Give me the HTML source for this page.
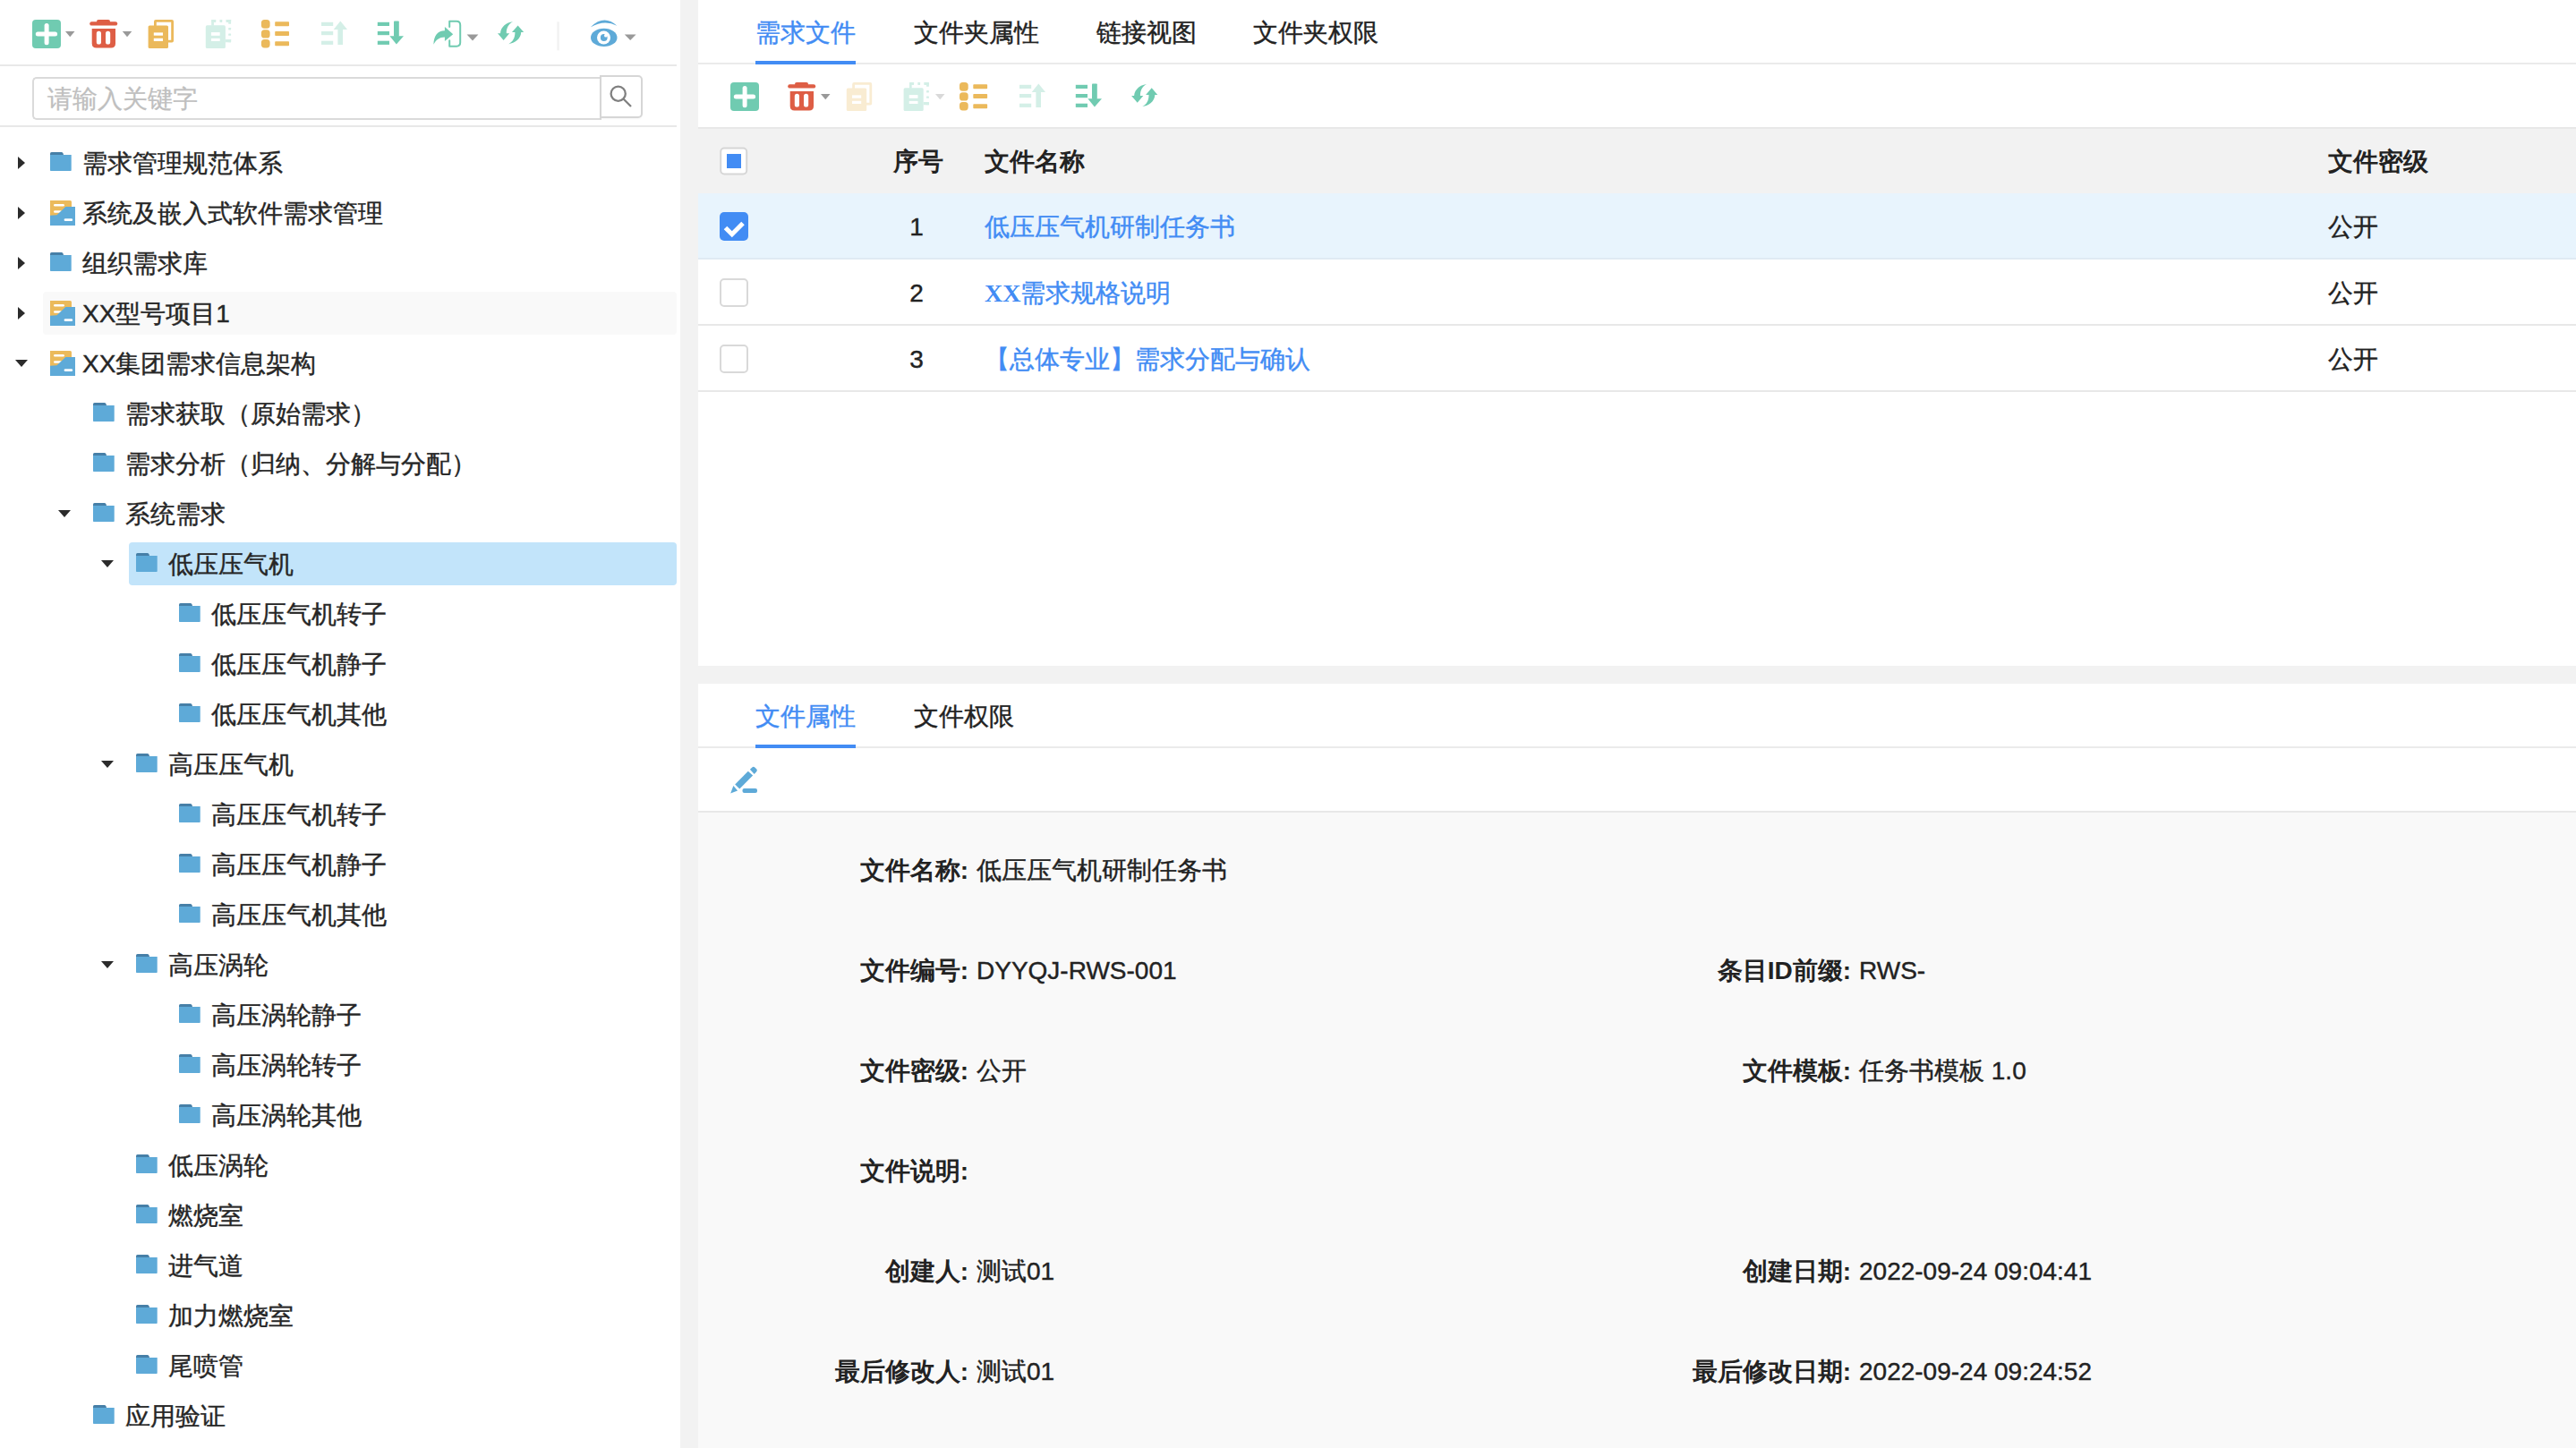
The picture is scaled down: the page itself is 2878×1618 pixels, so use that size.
<!DOCTYPE html>
<html><head><meta charset="utf-8"><style>
html,body{margin:0;padding:0;}
body{width:2878px;height:1618px;overflow:hidden;position:relative;background:#fff;font-family:'Liberation Sans',sans-serif;}
.a{position:absolute;}
</style></head><body>
<div class="a" style="left:760px;top:0;width:20px;height:1618px;background:#f2f2f2"></div>
<div class="a" style="left:0;top:72px;width:756px;height:2px;background:#e8e8e8"></div>
<div class="a" style="left:0;top:140px;width:756px;height:2px;background:#e8e8e8"></div>
<div class="a" style="left:36px;top:86px;width:634px;height:44px;border:2px solid #dadada;border-right:none;border-radius:5px 0 0 5px;"></div>
<div class="a" style="left:670px;top:84px;width:44px;height:44px;border:2px solid #d6d6d6;border-radius:0 5px 5px 0;background:#fff;box-shadow:0 1px 2px rgba(0,0,0,0.04)"></div>
<div class="a" style="left:53px;top:83px;line-height:56px;font-size:28px;color:#bfbfbf;white-space:nowrap;-webkit-text-stroke:0.3px #bfbfbf">请输入关键字</div>
<svg class="a" style="left:0;top:0" width="2878" height="1618"><circle cx="690.7" cy="104.7" r="8.1" fill="none" stroke="#808080" stroke-width="2.3"/><line x1="696.5" y1="110.5" x2="705" y2="119" stroke="#808080" stroke-width="2.3"/></svg>
<div style="position:absolute;left:48px;top:326px;width:708px;height:48px;background:#f9f9f9;border-radius:4px"></div><div style="position:absolute;left:144px;top:606px;width:612px;height:48px;background:#c2e4fa;border-radius:4px"></div>
<div class="a" style="left:780px;top:70px;width:2098px;height:2px;background:#ebebeb"></div>
<div class="a" style="left:844px;top:68px;width:112px;height:4px;background:#428cf4"></div>
<div class="a" style="left:780px;top:142px;width:2098px;height:2px;background:#e8e8e8"></div>
<div class="a" style="left:780px;top:144px;width:2098px;height:72px;background:#f2f2f2"></div>
<div class="a" style="left:780px;top:216px;width:2098px;height:72px;background:#e8f4fd"></div>
<div class="a" style="left:780px;top:288px;width:2098px;height:2px;background:#dfeaf3"></div>
<div class="a" style="left:780px;top:362px;width:2098px;height:2px;background:#e8e8e8"></div>
<div class="a" style="left:780px;top:436px;width:2098px;height:2px;background:#e8e8e8"></div>
<div class="a" style="left:780px;top:744px;width:2098px;height:20px;background:#f2f2f2"></div>
<div class="a" style="left:780px;top:834px;width:2098px;height:2px;background:#ebebeb"></div>
<div class="a" style="left:844px;top:832px;width:112px;height:4px;background:#428cf4"></div>
<div class="a" style="left:780px;top:906px;width:2098px;height:2px;background:#e8e8e8"></div>
<div class="a" style="left:780px;top:908px;width:2098px;height:710px;background:#f9f9f9"></div>
<svg class="a" style="left:0;top:0" width="2878" height="1618"><rect x="36" y="22" width="32" height="32" rx="4" fill="#70cbb1" /><path d="M42.3 38.1 H61.5 M52.1 28.5 V36" stroke="none"/><line x1="42.3" y1="38.1" x2="61.6" y2="38.1" stroke="#fff" stroke-width="5" stroke-linecap="round"/><line x1="52.1" y1="28.5" x2="52.1" y2="47.7" stroke="#fff" stroke-width="5" stroke-linecap="round"/><path d="M73 35 L83.5 35 L78.25 41.2 Z" fill="#999"/><rect x="100.2" y="24.2" width="31" height="4.4" rx="2.2" fill="#de5e45" /><rect x="108" y="22" width="15" height="4" rx="2" fill="#de5e45" /><path d="M102.7 32 H129 V48.4 Q129 53.4 124 53.4 H107.7 Q102.7 53.4 102.7 48.4 Z" fill="#de5e45"/><rect x="107.8" y="34.8" width="5.2" height="14.7" rx="2.6" fill="#fff" /><rect x="118" y="34.8" width="5.2" height="14.7" rx="2.6" fill="#fff" /><path d="M136.8 35 L147.3 35 L142.05 41.2 Z" fill="#999"/><rect x="173.4" y="23.4" width="19.2" height="22.8" rx="0.6" fill="none" stroke="#ebb95b" stroke-width="2.8"/><rect x="165.6" y="28.5" width="22.4" height="25.5" rx="1.6" fill="#ebb95b" /><rect x="171.79999999999998" y="36.4" width="10.2" height="3.3" rx="0" fill="#fff" /><rect x="171.79999999999998" y="42.8" width="10.2" height="3.2" rx="0" fill="#fff" /><rect x="229.8" y="28.3" width="22.1" height="25.7" rx="1.6" fill="#d4efe7" /><rect x="235.9" y="36.1" width="9.8" height="3.7" rx="0" fill="#fff" /><rect x="235.9" y="42.9" width="9.8" height="3.1" rx="0" fill="#fff" /><rect x="236.20000000000002" y="22.1" width="5.1" height="2.8" rx="0.4" fill="#d4efe7" /><rect x="245.5" y="22.1" width="2.8" height="2.8" rx="0.4" fill="#d4efe7" /><rect x="252.5" y="22.1" width="5.6" height="2.8" rx="0.4" fill="#d4efe7" /><rect x="236.20000000000002" y="22.1" width="2.7" height="6.7" rx="0.4" fill="#d4efe7" /><rect x="255.20000000000002" y="22.1" width="2.9" height="4.7" rx="0.4" fill="#d4efe7" /><rect x="255.20000000000002" y="31.1" width="2.9" height="2.4" rx="0.4" fill="#d4efe7" /><rect x="255.20000000000002" y="37.5" width="2.9" height="2.3" rx="0.4" fill="#d4efe7" /><rect x="255.20000000000002" y="44.1" width="2.9" height="3.2" rx="0.4" fill="#d4efe7" /><rect x="251.9" y="44.1" width="6.2" height="3.2" rx="0.4" fill="#d4efe7" /><rect x="291.9" y="22" width="9.7" height="9.8" rx="3.6" fill="#ebb95b" /><rect x="291.9" y="33.2" width="9.7" height="9.3" rx="3.6" fill="#ebb95b" /><rect x="291.9" y="44" width="9.7" height="9.399999999999999" rx="3.6" fill="#ebb95b" /><rect x="307.2" y="24.3" width="15.8" height="5" rx="0.8" fill="#ebb95b" /><rect x="307.2" y="35" width="15.8" height="5" rx="0.8" fill="#ebb95b" /><rect x="307.2" y="46.2" width="15.8" height="5" rx="0.8" fill="#ebb95b" /><rect x="359" y="24.8" width="13.2" height="4.2" rx="0" fill="#d4efe7" /><rect x="359" y="35" width="13.2" height="4.2" rx="0" fill="#d4efe7" /><rect x="359" y="45.7" width="13.2" height="4.2" rx="0" fill="#d4efe7" /><rect x="377.4" y="32.5" width="5.6" height="17.5" rx="0" fill="#d4efe7" /><path d="M372.7 32.9 L380.3 23.6 L388 32.9 Z" fill="#d4efe7"/><rect x="421.8" y="24.8" width="13.2" height="4.2" rx="0" fill="#70cbb1" /><rect x="421.8" y="35" width="13.2" height="4.2" rx="0" fill="#70cbb1" /><rect x="421.8" y="45.7" width="13.2" height="4.2" rx="0" fill="#70cbb1" /><rect x="440.0" y="23.4" width="5.8" height="17.5" rx="0.8" fill="#70cbb1" /><path d="M435.40000000000003 40.2 L442.90000000000003 49.5 L451.0 40.2 Z" fill="#70cbb1"/><path d="M502.2 29.9 V23.8 H510 Q514.2 23.8 514.2 28 V47.6 Q514.2 51.7 510 51.7 H502.2 V45.3" fill="none" stroke="#70cbb1" stroke-width="2" stroke-linecap="round" stroke-linejoin="round"/><path d="M484.4 49.8 C484.6 40 489 34.3 496.9 34.3 V30 L506.2 38.2 L496.9 45.9 V41.5 C491 41.5 487 44.5 484.4 49.8 Z" fill="#70cbb1"/><path d="M521.6 38.4 L534.4 38.4 L528.0 45.4 Z" fill="#999"/><g transform="translate(0 0)"><path d="M573 24.2 C566 25 559.3 30 559 37.3 L556 37.3 L562.6 44.9 L569.2 37.3 L565.8 37.3 C565.8 31 568 27 573 24.2 Z" fill="#70cbb1"/><path d="M573 24.2 C566 25 559.3 30 559 37.3 L556 37.3 L562.6 44.9 L569.2 37.3 L565.8 37.3 C565.8 31 568 27 573 24.2 Z" fill="#70cbb1" transform="rotate(180 570.6 36.7)"/></g><rect x="622.3" y="24.3" width="2.5" height="32" rx="0" fill="#f2f2f2" /><ellipse cx="674.75" cy="41.9" rx="14.75" ry="10.2" fill="#5eaad8"/><circle cx="674.5" cy="42" r="7.5" fill="#fff"/><circle cx="674.75" cy="42" r="3.9" fill="#5eaad8"/><circle cx="676.9" cy="39.7" r="1.9" fill="#fff"/><path d="M660.2 29.9 Q674.9 15.6 689.3 28.7 Q674.9 21.8 660.1 30.3 Z" fill="#5eaad8"/><path d="M697.8 38.5 L710.5999999999999 38.5 L704.1999999999999 45.1 Z" fill="#999"/><rect x="816" y="92" width="32" height="32" rx="4" fill="#70cbb1" /><path d="M822.3 108.1 H841.5 M832.1 98.5 V816" stroke="none"/><line x1="822.3" y1="108.1" x2="841.6" y2="108.1" stroke="#fff" stroke-width="5" stroke-linecap="round"/><line x1="832.1" y1="98.5" x2="832.1" y2="117.7" stroke="#fff" stroke-width="5" stroke-linecap="round"/><rect x="880.2" y="94.2" width="31" height="4.4" rx="2.2" fill="#de5e45" /><rect x="888" y="92" width="15" height="4" rx="2" fill="#de5e45" /><path d="M882.7 102 H909 V118.4 Q909 123.4 904 123.4 H887.7 Q882.7 123.4 882.7 118.4 Z" fill="#de5e45"/><rect x="887.8" y="104.8" width="5.2" height="14.7" rx="2.6" fill="#fff" /><rect x="898" y="104.8" width="5.2" height="14.7" rx="2.6" fill="#fff" /><path d="M917 105 L927.5 105 L922.25 111.2 Z" fill="#999"/><rect x="953.5999999999999" y="93.4" width="19.2" height="22.8" rx="0.6" fill="none" stroke="#f9ecd2" stroke-width="2.8"/><rect x="945.8" y="98.5" width="22.4" height="25.5" rx="1.6" fill="#f9ecd2" /><rect x="952.0" y="106.4" width="10.2" height="3.3" rx="0" fill="#fff" /><rect x="952.0" y="112.8" width="10.2" height="3.2" rx="0" fill="#fff" /><rect x="1009.6" y="98.3" width="22.1" height="25.7" rx="1.6" fill="#d4efe7" /><rect x="1015.7" y="106.1" width="9.8" height="3.7" rx="0" fill="#fff" /><rect x="1015.7" y="112.9" width="9.8" height="3.1" rx="0" fill="#fff" /><rect x="1016.0" y="92.1" width="5.1" height="2.8" rx="0.4" fill="#d4efe7" /><rect x="1025.3" y="92.1" width="2.8" height="2.8" rx="0.4" fill="#d4efe7" /><rect x="1032.3" y="92.1" width="5.6" height="2.8" rx="0.4" fill="#d4efe7" /><rect x="1016.0" y="92.1" width="2.7" height="6.7" rx="0.4" fill="#d4efe7" /><rect x="1035.0" y="92.1" width="2.9" height="4.7" rx="0.4" fill="#d4efe7" /><rect x="1035.0" y="101.1" width="2.9" height="2.4" rx="0.4" fill="#d4efe7" /><rect x="1035.0" y="107.5" width="2.9" height="2.3" rx="0.4" fill="#d4efe7" /><rect x="1035.0" y="114.1" width="2.9" height="3.2" rx="0.4" fill="#d4efe7" /><rect x="1031.7" y="114.1" width="6.2" height="3.2" rx="0.4" fill="#d4efe7" /><path d="M1045 105 L1055.5 105 L1050.25 111.2 Z" fill="#d9d9d9"/><rect x="1072" y="92" width="9.7" height="9.8" rx="3.6" fill="#ebb95b" /><rect x="1072" y="103.2" width="9.7" height="9.3" rx="3.6" fill="#ebb95b" /><rect x="1072" y="114" width="9.7" height="9.399999999999999" rx="3.6" fill="#ebb95b" /><rect x="1087.3" y="94.3" width="15.8" height="5" rx="0.8" fill="#ebb95b" /><rect x="1087.3" y="105" width="15.8" height="5" rx="0.8" fill="#ebb95b" /><rect x="1087.3" y="116.2" width="15.8" height="5" rx="0.8" fill="#ebb95b" /><rect x="1139" y="94.8" width="13.2" height="4.2" rx="0" fill="#d4efe7" /><rect x="1139" y="105" width="13.2" height="4.2" rx="0" fill="#d4efe7" /><rect x="1139" y="115.7" width="13.2" height="4.2" rx="0" fill="#d4efe7" /><rect x="1157.4" y="102.5" width="5.6" height="17.5" rx="0" fill="#d4efe7" /><path d="M1152.7 102.9 L1160.3 93.6 L1168 102.9 Z" fill="#d4efe7"/><rect x="1201.8" y="94.8" width="13.2" height="4.2" rx="0" fill="#70cbb1" /><rect x="1201.8" y="105" width="13.2" height="4.2" rx="0" fill="#70cbb1" /><rect x="1201.8" y="115.7" width="13.2" height="4.2" rx="0" fill="#70cbb1" /><rect x="1220.0" y="93.4" width="5.8" height="17.5" rx="0.8" fill="#70cbb1" /><path d="M1215.3999999999999 110.2 L1222.8999999999999 119.5 L1231.0 110.2 Z" fill="#70cbb1"/><g transform="translate(708.1 69.8)"><path d="M573 24.2 C566 25 559.3 30 559 37.3 L556 37.3 L562.6 44.9 L569.2 37.3 L565.8 37.3 C565.8 31 568 27 573 24.2 Z" fill="#70cbb1"/><path d="M573 24.2 C566 25 559.3 30 559 37.3 L556 37.3 L562.6 44.9 L569.2 37.3 L565.8 37.3 C565.8 31 568 27 573 24.2 Z" fill="#70cbb1" transform="rotate(180 570.6 36.7)"/></g><path d="M20 175 L28 182 L20 189 Z" fill="#2b2b2b"/><path d="M56 173 V171.6 Q56 170 57.6 170 H68.6 Q69.6 170 70.4 171 L71 173 Z" fill="#467fa7"/><path d="M56 173 H79.7 V190.2 Q79.7 191 78.9 191 H56.8 Q56 191 56 190.2 Z" fill="#5eaad8"/><path d="M20 231 L28 238 L20 245 Z" fill="#2b2b2b"/><path d="M56 224 H78.4 Q80 224 80 225.6 V234 H56 Z" fill="#ebba5b"/><rect x="56" y="230" width="17" height="11" rx="0" fill="#ebba5b" /><rect x="60" y="228" width="11.9" height="2.5" rx="1.25" fill="#fff" /><rect x="60" y="235.2" width="9" height="2.6" rx="1.3" fill="#fff" /><path d="M56 240.7 L63.5 240.2 L73.3 231 H84 V252 H56 Z" fill="#5eaad8"/><rect x="71.6" y="244.2" width="9.6" height="2.9" rx="1.45" fill="#fff" /><path d="M20 287 L28 294 L20 301 Z" fill="#2b2b2b"/><path d="M56 285 V283.6 Q56 282 57.6 282 H68.6 Q69.6 282 70.4 283 L71 285 Z" fill="#467fa7"/><path d="M56 285 H79.7 V302.2 Q79.7 303 78.9 303 H56.8 Q56 303 56 302.2 Z" fill="#5eaad8"/><path d="M20 343 L28 350 L20 357 Z" fill="#2b2b2b"/><path d="M56 336 H78.4 Q80 336 80 337.6 V346 H56 Z" fill="#ebba5b"/><rect x="56" y="342" width="17" height="11" rx="0" fill="#ebba5b" /><rect x="60" y="340" width="11.9" height="2.5" rx="1.25" fill="#fff" /><rect x="60" y="347.2" width="9" height="2.6" rx="1.3" fill="#fff" /><path d="M56 352.7 L63.5 352.2 L73.3 343 H84 V364 H56 Z" fill="#5eaad8"/><rect x="71.6" y="356.2" width="9.6" height="2.9" rx="1.45" fill="#fff" /><path d="M17 402 L31 402 L24 410 Z" fill="#2b2b2b"/><path d="M56 392 H78.4 Q80 392 80 393.6 V402 H56 Z" fill="#ebba5b"/><rect x="56" y="398" width="17" height="11" rx="0" fill="#ebba5b" /><rect x="60" y="396" width="11.9" height="2.5" rx="1.25" fill="#fff" /><rect x="60" y="403.2" width="9" height="2.6" rx="1.3" fill="#fff" /><path d="M56 408.7 L63.5 408.2 L73.3 399 H84 V420 H56 Z" fill="#5eaad8"/><rect x="71.6" y="412.2" width="9.6" height="2.9" rx="1.45" fill="#fff" /><path d="M104 453 V451.6 Q104 450 105.6 450 H116.6 Q117.6 450 118.4 451 L119 453 Z" fill="#467fa7"/><path d="M104 453 H127.7 V470.2 Q127.7 471 126.9 471 H104.8 Q104 471 104 470.2 Z" fill="#5eaad8"/><path d="M104 509 V507.6 Q104 506 105.6 506 H116.6 Q117.6 506 118.4 507 L119 509 Z" fill="#467fa7"/><path d="M104 509 H127.7 V526.2 Q127.7 527 126.9 527 H104.8 Q104 527 104 526.2 Z" fill="#5eaad8"/><path d="M65 570 L79 570 L72 578 Z" fill="#2b2b2b"/><path d="M104 565 V563.6 Q104 562 105.6 562 H116.6 Q117.6 562 118.4 563 L119 565 Z" fill="#467fa7"/><path d="M104 565 H127.7 V582.2 Q127.7 583 126.9 583 H104.8 Q104 583 104 582.2 Z" fill="#5eaad8"/><path d="M113 626 L127 626 L120 634 Z" fill="#2b2b2b"/><path d="M152 621 V619.6 Q152 618 153.6 618 H164.6 Q165.6 618 166.4 619 L167 621 Z" fill="#467fa7"/><path d="M152 621 H175.7 V638.2 Q175.7 639 174.9 639 H152.8 Q152 639 152 638.2 Z" fill="#5eaad8"/><path d="M200 677 V675.6 Q200 674 201.6 674 H212.6 Q213.6 674 214.4 675 L215 677 Z" fill="#467fa7"/><path d="M200 677 H223.7 V694.2 Q223.7 695 222.9 695 H200.8 Q200 695 200 694.2 Z" fill="#5eaad8"/><path d="M200 733 V731.6 Q200 730 201.6 730 H212.6 Q213.6 730 214.4 731 L215 733 Z" fill="#467fa7"/><path d="M200 733 H223.7 V750.2 Q223.7 751 222.9 751 H200.8 Q200 751 200 750.2 Z" fill="#5eaad8"/><path d="M200 789 V787.6 Q200 786 201.6 786 H212.6 Q213.6 786 214.4 787 L215 789 Z" fill="#467fa7"/><path d="M200 789 H223.7 V806.2 Q223.7 807 222.9 807 H200.8 Q200 807 200 806.2 Z" fill="#5eaad8"/><path d="M113 850 L127 850 L120 858 Z" fill="#2b2b2b"/><path d="M152 845 V843.6 Q152 842 153.6 842 H164.6 Q165.6 842 166.4 843 L167 845 Z" fill="#467fa7"/><path d="M152 845 H175.7 V862.2 Q175.7 863 174.9 863 H152.8 Q152 863 152 862.2 Z" fill="#5eaad8"/><path d="M200 901 V899.6 Q200 898 201.6 898 H212.6 Q213.6 898 214.4 899 L215 901 Z" fill="#467fa7"/><path d="M200 901 H223.7 V918.2 Q223.7 919 222.9 919 H200.8 Q200 919 200 918.2 Z" fill="#5eaad8"/><path d="M200 957 V955.6 Q200 954 201.6 954 H212.6 Q213.6 954 214.4 955 L215 957 Z" fill="#467fa7"/><path d="M200 957 H223.7 V974.2 Q223.7 975 222.9 975 H200.8 Q200 975 200 974.2 Z" fill="#5eaad8"/><path d="M200 1013 V1011.6 Q200 1010 201.6 1010 H212.6 Q213.6 1010 214.4 1011 L215 1013 Z" fill="#467fa7"/><path d="M200 1013 H223.7 V1030.2 Q223.7 1031 222.9 1031 H200.8 Q200 1031 200 1030.2 Z" fill="#5eaad8"/><path d="M113 1074 L127 1074 L120 1082 Z" fill="#2b2b2b"/><path d="M152 1069 V1067.6 Q152 1066 153.6 1066 H164.6 Q165.6 1066 166.4 1067 L167 1069 Z" fill="#467fa7"/><path d="M152 1069 H175.7 V1086.2 Q175.7 1087 174.9 1087 H152.8 Q152 1087 152 1086.2 Z" fill="#5eaad8"/><path d="M200 1125 V1123.6 Q200 1122 201.6 1122 H212.6 Q213.6 1122 214.4 1123 L215 1125 Z" fill="#467fa7"/><path d="M200 1125 H223.7 V1142.2 Q223.7 1143 222.9 1143 H200.8 Q200 1143 200 1142.2 Z" fill="#5eaad8"/><path d="M200 1181 V1179.6 Q200 1178 201.6 1178 H212.6 Q213.6 1178 214.4 1179 L215 1181 Z" fill="#467fa7"/><path d="M200 1181 H223.7 V1198.2 Q223.7 1199 222.9 1199 H200.8 Q200 1199 200 1198.2 Z" fill="#5eaad8"/><path d="M200 1237 V1235.6 Q200 1234 201.6 1234 H212.6 Q213.6 1234 214.4 1235 L215 1237 Z" fill="#467fa7"/><path d="M200 1237 H223.7 V1254.2 Q223.7 1255 222.9 1255 H200.8 Q200 1255 200 1254.2 Z" fill="#5eaad8"/><path d="M152 1293 V1291.6 Q152 1290 153.6 1290 H164.6 Q165.6 1290 166.4 1291 L167 1293 Z" fill="#467fa7"/><path d="M152 1293 H175.7 V1310.2 Q175.7 1311 174.9 1311 H152.8 Q152 1311 152 1310.2 Z" fill="#5eaad8"/><path d="M152 1349 V1347.6 Q152 1346 153.6 1346 H164.6 Q165.6 1346 166.4 1347 L167 1349 Z" fill="#467fa7"/><path d="M152 1349 H175.7 V1366.2 Q175.7 1367 174.9 1367 H152.8 Q152 1367 152 1366.2 Z" fill="#5eaad8"/><path d="M152 1405 V1403.6 Q152 1402 153.6 1402 H164.6 Q165.6 1402 166.4 1403 L167 1405 Z" fill="#467fa7"/><path d="M152 1405 H175.7 V1422.2 Q175.7 1423 174.9 1423 H152.8 Q152 1423 152 1422.2 Z" fill="#5eaad8"/><path d="M152 1461 V1459.6 Q152 1458 153.6 1458 H164.6 Q165.6 1458 166.4 1459 L167 1461 Z" fill="#467fa7"/><path d="M152 1461 H175.7 V1478.2 Q175.7 1479 174.9 1479 H152.8 Q152 1479 152 1478.2 Z" fill="#5eaad8"/><path d="M152 1517 V1515.6 Q152 1514 153.6 1514 H164.6 Q165.6 1514 166.4 1515 L167 1517 Z" fill="#467fa7"/><path d="M152 1517 H175.7 V1534.2 Q175.7 1535 174.9 1535 H152.8 Q152 1535 152 1534.2 Z" fill="#5eaad8"/><path d="M104 1573 V1571.6 Q104 1570 105.6 1570 H116.6 Q117.6 1570 118.4 1571 L119 1573 Z" fill="#467fa7"/><path d="M104 1573 H127.7 V1590.2 Q127.7 1591 126.9 1591 H104.8 Q104 1591 104 1590.2 Z" fill="#5eaad8"/><rect x="805.2" y="165.5" width="29" height="29" rx="4" fill="#fff" stroke="#d6d6d6" stroke-width="2"/><rect x="812" y="172" width="16" height="16" rx="0" fill="#428cf4" /><rect x="804" y="237" width="32" height="32" rx="5" fill="#428cf4" /><path d="M810.5 254.5 L817.8 261.8 L830 249.5" fill="none" stroke="#fff" stroke-width="5"/><rect x="805" y="312" width="30" height="30" rx="4" fill="#fff" stroke="#d9d9d9" stroke-width="2"/><rect x="805" y="386" width="30" height="30" rx="4" fill="#fff" stroke="#d9d9d9" stroke-width="2"/><path d="M816.2 886.6 L819.4 878 L824.1 883.4 Z" fill="#5eaad8"/><path d="M821.2 876.4 L835.8 861.7 L841.1 866.4 L826.3 881.5 Z" fill="#5eaad8"/><path d="M837.9 859.8 L840.3 857.4 Q841.8 856 843.3 857.4 L845.2 859.3 Q846.6 860.8 845.2 862.3 L842.7 865.1 Z" fill="#5eaad8"/><rect x="829.5" y="881.1" width="16.5" height="4.8" rx="2" fill="#5eaad8" /></svg>
<div style="position:absolute;left:92px;top:155.0px;line-height:56px;font-size:28px;color:#262626;font-weight:normal;white-space:nowrap;font-family:'Liberation Sans',sans-serif;-webkit-text-stroke:0.4px #262626;">需求管理规范体系</div><div style="position:absolute;left:92px;top:211.0px;line-height:56px;font-size:28px;color:#262626;font-weight:normal;white-space:nowrap;font-family:'Liberation Sans',sans-serif;-webkit-text-stroke:0.4px #262626;">系统及嵌入式软件需求管理</div><div style="position:absolute;left:92px;top:267.0px;line-height:56px;font-size:28px;color:#262626;font-weight:normal;white-space:nowrap;font-family:'Liberation Sans',sans-serif;-webkit-text-stroke:0.4px #262626;">组织需求库</div><div style="position:absolute;left:92px;top:323.0px;line-height:56px;font-size:28px;color:#262626;font-weight:normal;white-space:nowrap;font-family:'Liberation Sans',sans-serif;-webkit-text-stroke:0.4px #262626;">XX型号项目1</div><div style="position:absolute;left:92px;top:379.0px;line-height:56px;font-size:28px;color:#262626;font-weight:normal;white-space:nowrap;font-family:'Liberation Sans',sans-serif;-webkit-text-stroke:0.4px #262626;">XX集团需求信息架构</div><div style="position:absolute;left:140px;top:435.0px;line-height:56px;font-size:28px;color:#262626;font-weight:normal;white-space:nowrap;font-family:'Liberation Sans',sans-serif;-webkit-text-stroke:0.4px #262626;">需求获取（原始需求）</div><div style="position:absolute;left:140px;top:491.0px;line-height:56px;font-size:28px;color:#262626;font-weight:normal;white-space:nowrap;font-family:'Liberation Sans',sans-serif;-webkit-text-stroke:0.4px #262626;">需求分析（归纳、分解与分配）</div><div style="position:absolute;left:140px;top:547.0px;line-height:56px;font-size:28px;color:#262626;font-weight:normal;white-space:nowrap;font-family:'Liberation Sans',sans-serif;-webkit-text-stroke:0.4px #262626;">系统需求</div><div style="position:absolute;left:188px;top:603.0px;line-height:56px;font-size:28px;color:#262626;font-weight:normal;white-space:nowrap;font-family:'Liberation Sans',sans-serif;-webkit-text-stroke:0.4px #262626;">低压压气机</div><div style="position:absolute;left:236px;top:659.0px;line-height:56px;font-size:28px;color:#262626;font-weight:normal;white-space:nowrap;font-family:'Liberation Sans',sans-serif;-webkit-text-stroke:0.4px #262626;">低压压气机转子</div><div style="position:absolute;left:236px;top:715.0px;line-height:56px;font-size:28px;color:#262626;font-weight:normal;white-space:nowrap;font-family:'Liberation Sans',sans-serif;-webkit-text-stroke:0.4px #262626;">低压压气机静子</div><div style="position:absolute;left:236px;top:771.0px;line-height:56px;font-size:28px;color:#262626;font-weight:normal;white-space:nowrap;font-family:'Liberation Sans',sans-serif;-webkit-text-stroke:0.4px #262626;">低压压气机其他</div><div style="position:absolute;left:188px;top:827.0px;line-height:56px;font-size:28px;color:#262626;font-weight:normal;white-space:nowrap;font-family:'Liberation Sans',sans-serif;-webkit-text-stroke:0.4px #262626;">高压压气机</div><div style="position:absolute;left:236px;top:883.0px;line-height:56px;font-size:28px;color:#262626;font-weight:normal;white-space:nowrap;font-family:'Liberation Sans',sans-serif;-webkit-text-stroke:0.4px #262626;">高压压气机转子</div><div style="position:absolute;left:236px;top:939.0px;line-height:56px;font-size:28px;color:#262626;font-weight:normal;white-space:nowrap;font-family:'Liberation Sans',sans-serif;-webkit-text-stroke:0.4px #262626;">高压压气机静子</div><div style="position:absolute;left:236px;top:995.0px;line-height:56px;font-size:28px;color:#262626;font-weight:normal;white-space:nowrap;font-family:'Liberation Sans',sans-serif;-webkit-text-stroke:0.4px #262626;">高压压气机其他</div><div style="position:absolute;left:188px;top:1051.0px;line-height:56px;font-size:28px;color:#262626;font-weight:normal;white-space:nowrap;font-family:'Liberation Sans',sans-serif;-webkit-text-stroke:0.4px #262626;">高压涡轮</div><div style="position:absolute;left:236px;top:1107.0px;line-height:56px;font-size:28px;color:#262626;font-weight:normal;white-space:nowrap;font-family:'Liberation Sans',sans-serif;-webkit-text-stroke:0.4px #262626;">高压涡轮静子</div><div style="position:absolute;left:236px;top:1163.0px;line-height:56px;font-size:28px;color:#262626;font-weight:normal;white-space:nowrap;font-family:'Liberation Sans',sans-serif;-webkit-text-stroke:0.4px #262626;">高压涡轮转子</div><div style="position:absolute;left:236px;top:1219.0px;line-height:56px;font-size:28px;color:#262626;font-weight:normal;white-space:nowrap;font-family:'Liberation Sans',sans-serif;-webkit-text-stroke:0.4px #262626;">高压涡轮其他</div><div style="position:absolute;left:188px;top:1275.0px;line-height:56px;font-size:28px;color:#262626;font-weight:normal;white-space:nowrap;font-family:'Liberation Sans',sans-serif;-webkit-text-stroke:0.4px #262626;">低压涡轮</div><div style="position:absolute;left:188px;top:1331.0px;line-height:56px;font-size:28px;color:#262626;font-weight:normal;white-space:nowrap;font-family:'Liberation Sans',sans-serif;-webkit-text-stroke:0.4px #262626;">燃烧室</div><div style="position:absolute;left:188px;top:1387.0px;line-height:56px;font-size:28px;color:#262626;font-weight:normal;white-space:nowrap;font-family:'Liberation Sans',sans-serif;-webkit-text-stroke:0.4px #262626;">进气道</div><div style="position:absolute;left:188px;top:1443.0px;line-height:56px;font-size:28px;color:#262626;font-weight:normal;white-space:nowrap;font-family:'Liberation Sans',sans-serif;-webkit-text-stroke:0.4px #262626;">加力燃烧室</div><div style="position:absolute;left:188px;top:1499.0px;line-height:56px;font-size:28px;color:#262626;font-weight:normal;white-space:nowrap;font-family:'Liberation Sans',sans-serif;-webkit-text-stroke:0.4px #262626;">尾喷管</div><div style="position:absolute;left:140px;top:1555.0px;line-height:56px;font-size:28px;color:#262626;font-weight:normal;white-space:nowrap;font-family:'Liberation Sans',sans-serif;-webkit-text-stroke:0.4px #262626;">应用验证</div><div style="position:absolute;left:843.5px;top:9.0px;line-height:56px;font-size:28px;color:#428cf4;font-weight:normal;white-space:nowrap;font-family:'Liberation Sans',sans-serif;-webkit-text-stroke:0.4px #428cf4;">需求文件</div><div style="position:absolute;left:1021px;top:9.0px;line-height:56px;font-size:28px;color:#222;font-weight:normal;white-space:nowrap;font-family:'Liberation Sans',sans-serif;-webkit-text-stroke:0.4px #222;">文件夹属性</div><div style="position:absolute;left:1225px;top:9.0px;line-height:56px;font-size:28px;color:#222;font-weight:normal;white-space:nowrap;font-family:'Liberation Sans',sans-serif;-webkit-text-stroke:0.4px #222;">链接视图</div><div style="position:absolute;left:1400px;top:9.0px;line-height:56px;font-size:28px;color:#222;font-weight:normal;white-space:nowrap;font-family:'Liberation Sans',sans-serif;-webkit-text-stroke:0.4px #222;">文件夹权限</div><div style="position:absolute;left:998px;top:153.0px;line-height:56px;font-size:28px;color:#222;font-weight:bold;white-space:nowrap;font-family:'Liberation Sans',sans-serif;">序号</div><div style="position:absolute;left:1100px;top:153.0px;line-height:56px;font-size:28px;color:#222;font-weight:bold;white-space:nowrap;font-family:'Liberation Sans',sans-serif;">文件名称</div><div style="position:absolute;left:2601px;top:153.0px;line-height:56px;font-size:28px;color:#222;font-weight:bold;white-space:nowrap;font-family:'Liberation Sans',sans-serif;">文件密级</div><div style="position:absolute;left:1024px;top:226.0px;line-height:56px;font-size:28px;color:#222;font-weight:normal;white-space:nowrap;font-family:'Liberation Sans',sans-serif;transform:translateX(-50%);-webkit-text-stroke:0.4px #222;">1</div><div style="position:absolute;left:1100px;top:226.0px;line-height:56px;font-size:28px;color:#428cf4;font-weight:normal;white-space:nowrap;font-family:'Liberation Serif',serif;-webkit-text-stroke:0.4px #428cf4;">低压压气机研制任务书</div><div style="position:absolute;left:2601px;top:226.0px;line-height:56px;font-size:28px;color:#222;font-weight:normal;white-space:nowrap;font-family:'Liberation Sans',sans-serif;-webkit-text-stroke:0.4px #222;">公开</div><div style="position:absolute;left:1024px;top:300.0px;line-height:56px;font-size:28px;color:#222;font-weight:normal;white-space:nowrap;font-family:'Liberation Sans',sans-serif;transform:translateX(-50%);-webkit-text-stroke:0.4px #222;">2</div><div style="position:absolute;left:1100px;top:300.0px;line-height:56px;font-size:28px;color:#428cf4;font-weight:normal;white-space:nowrap;font-family:'Liberation Serif',serif;-webkit-text-stroke:0.4px #428cf4;"><b style="-webkit-text-stroke:0">XX</b>需求规格说明</div><div style="position:absolute;left:2601px;top:300.0px;line-height:56px;font-size:28px;color:#222;font-weight:normal;white-space:nowrap;font-family:'Liberation Sans',sans-serif;-webkit-text-stroke:0.4px #222;">公开</div><div style="position:absolute;left:1024px;top:374.0px;line-height:56px;font-size:28px;color:#222;font-weight:normal;white-space:nowrap;font-family:'Liberation Sans',sans-serif;transform:translateX(-50%);-webkit-text-stroke:0.4px #222;">3</div><div style="position:absolute;left:1100px;top:374.0px;line-height:56px;font-size:28px;color:#428cf4;font-weight:normal;white-space:nowrap;font-family:'Liberation Serif',serif;-webkit-text-stroke:0.4px #428cf4;">【总体专业】需求分配与确认</div><div style="position:absolute;left:2601px;top:374.0px;line-height:56px;font-size:28px;color:#222;font-weight:normal;white-space:nowrap;font-family:'Liberation Sans',sans-serif;-webkit-text-stroke:0.4px #222;">公开</div><div style="position:absolute;left:843.5px;top:773.0px;line-height:56px;font-size:28px;color:#428cf4;font-weight:normal;white-space:nowrap;font-family:'Liberation Sans',sans-serif;-webkit-text-stroke:0.4px #428cf4;">文件属性</div><div style="position:absolute;left:1021px;top:773.0px;line-height:56px;font-size:28px;color:#222;font-weight:normal;white-space:nowrap;font-family:'Liberation Sans',sans-serif;-webkit-text-stroke:0.4px #222;">文件权限</div><div style="position:absolute;right:1796px;top:945.0px;line-height:56px;font-size:28px;color:#222;font-weight:bold;white-space:nowrap;font-family:'Liberation Sans',sans-serif;">文件名称:</div><div style="position:absolute;left:1091px;top:945.0px;line-height:56px;font-size:28px;color:#222;font-weight:normal;white-space:nowrap;font-family:'Liberation Sans',sans-serif;-webkit-text-stroke:0.4px #222;">低压压气机研制任务书</div><div style="position:absolute;right:1796px;top:1057.0px;line-height:56px;font-size:28px;color:#222;font-weight:bold;white-space:nowrap;font-family:'Liberation Sans',sans-serif;">文件编号:</div><div style="position:absolute;left:1091px;top:1057.0px;line-height:56px;font-size:28px;color:#222;font-weight:normal;white-space:nowrap;font-family:'Liberation Sans',sans-serif;-webkit-text-stroke:0.4px #222;">DYYQJ-RWS-001</div><div style="position:absolute;right:810px;top:1057.0px;line-height:56px;font-size:28px;color:#222;font-weight:bold;white-space:nowrap;font-family:'Liberation Sans',sans-serif;">条目ID前缀:</div><div style="position:absolute;left:2077px;top:1057.0px;line-height:56px;font-size:28px;color:#222;font-weight:normal;white-space:nowrap;font-family:'Liberation Sans',sans-serif;-webkit-text-stroke:0.4px #222;">RWS-</div><div style="position:absolute;right:1796px;top:1169.0px;line-height:56px;font-size:28px;color:#222;font-weight:bold;white-space:nowrap;font-family:'Liberation Sans',sans-serif;">文件密级:</div><div style="position:absolute;left:1091px;top:1169.0px;line-height:56px;font-size:28px;color:#222;font-weight:normal;white-space:nowrap;font-family:'Liberation Sans',sans-serif;-webkit-text-stroke:0.4px #222;">公开</div><div style="position:absolute;right:810px;top:1169.0px;line-height:56px;font-size:28px;color:#222;font-weight:bold;white-space:nowrap;font-family:'Liberation Sans',sans-serif;">文件模板:</div><div style="position:absolute;left:2077px;top:1169.0px;line-height:56px;font-size:28px;color:#222;font-weight:normal;white-space:nowrap;font-family:'Liberation Sans',sans-serif;-webkit-text-stroke:0.4px #222;">任务书模板 1.0</div><div style="position:absolute;right:1796px;top:1281.0px;line-height:56px;font-size:28px;color:#222;font-weight:bold;white-space:nowrap;font-family:'Liberation Sans',sans-serif;">文件说明:</div><div style="position:absolute;right:1796px;top:1393.0px;line-height:56px;font-size:28px;color:#222;font-weight:bold;white-space:nowrap;font-family:'Liberation Sans',sans-serif;">创建人:</div><div style="position:absolute;left:1091px;top:1393.0px;line-height:56px;font-size:28px;color:#222;font-weight:normal;white-space:nowrap;font-family:'Liberation Sans',sans-serif;-webkit-text-stroke:0.4px #222;">测试01</div><div style="position:absolute;right:810px;top:1393.0px;line-height:56px;font-size:28px;color:#222;font-weight:bold;white-space:nowrap;font-family:'Liberation Sans',sans-serif;">创建日期:</div><div style="position:absolute;left:2077px;top:1393.0px;line-height:56px;font-size:28px;color:#222;font-weight:normal;white-space:nowrap;font-family:'Liberation Sans',sans-serif;-webkit-text-stroke:0.4px #222;">2022-09-24 09:04:41</div><div style="position:absolute;right:1796px;top:1505.0px;line-height:56px;font-size:28px;color:#222;font-weight:bold;white-space:nowrap;font-family:'Liberation Sans',sans-serif;">最后修改人:</div><div style="position:absolute;left:1091px;top:1505.0px;line-height:56px;font-size:28px;color:#222;font-weight:normal;white-space:nowrap;font-family:'Liberation Sans',sans-serif;-webkit-text-stroke:0.4px #222;">测试01</div><div style="position:absolute;right:810px;top:1505.0px;line-height:56px;font-size:28px;color:#222;font-weight:bold;white-space:nowrap;font-family:'Liberation Sans',sans-serif;">最后修改日期:</div><div style="position:absolute;left:2077px;top:1505.0px;line-height:56px;font-size:28px;color:#222;font-weight:normal;white-space:nowrap;font-family:'Liberation Sans',sans-serif;-webkit-text-stroke:0.4px #222;">2022-09-24 09:24:52</div>
</body></html>
